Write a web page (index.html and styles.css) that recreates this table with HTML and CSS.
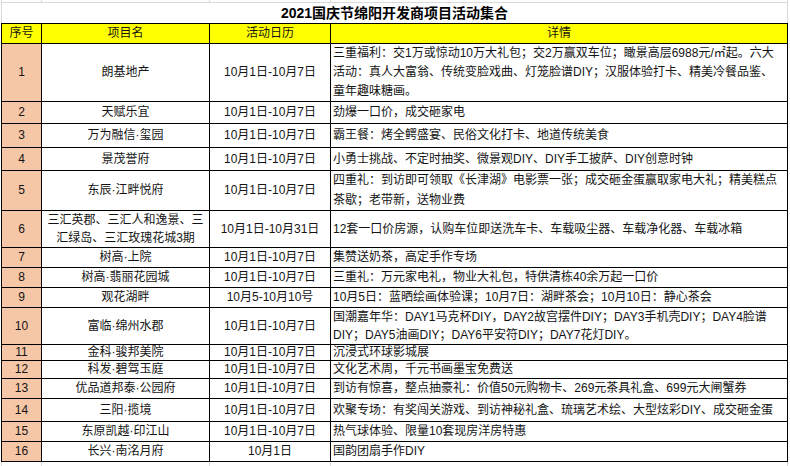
FILE: index.html
```html
<!DOCTYPE html>
<html lang="zh-CN">
<head>
<meta charset="utf-8">
<title>2021国庆节绵阳开发商项目活动集合</title>
<link rel="stylesheet" href="styles.css">
</head>
<body>
<div class="sheet">
<table class="grid">
  <colgroup>
    <col class="c-no"><col class="c-name"><col class="c-date"><col class="c-detail">
  </colgroup>
  <tr class="strip"><td></td><td></td><td></td><td></td></tr>
  <tr class="title-row"><td class="title" colspan="4">2021国庆节绵阳开发商项目活动集合</td></tr>
  <tr class="head h20"><td>序号</td><td>项目名</td><td>活动日历</td><td>详情</td></tr>
  <tr class="h58"><td class="no">1</td><td class="ctr">朗基地产</td><td class="ctr">10月1日-10月7日</td><td class="det l20">三重福利：交1万或惊动10万大礼包；交2万赢双车位；瞰景高层6988元/㎡起。六大<br>活动：真人大富翁、传统变脸戏曲、灯笼脸谱DIY；汉服体验打卡、精美冷餐品鉴、<br>童年趣味糖画。</td></tr>
  <tr class="h22"><td class="no">2</td><td class="ctr">天赋乐宜</td><td class="ctr">10月1日-10月7日</td><td class="det">劲爆一口价，成交砸家电</td></tr>
  <tr class="h24"><td class="no">3</td><td class="ctr">万为融信·玺园</td><td class="ctr">10月1日-10月7日</td><td class="det">霸王餐：烤全鳄盛宴、民俗文化打卡、地道传统美食</td></tr>
  <tr class="h23"><td class="no">4</td><td class="ctr">景茂誉府</td><td class="ctr">10月1日-10月7日</td><td class="det">小勇士挑战、不定时抽奖、微景观DIY、DIY手工披萨、DIY创意时钟</td></tr>
  <tr class="h40"><td class="no">5</td><td class="ctr">东辰·江畔悦府</td><td class="ctr">10月1日-10月7日</td><td class="det l19">四重礼：到访即可领取《长津湖》电影票一张；成交砸金蛋赢取家电大礼；精美糕点<br>茶歇；老带新，送物业费</td></tr>
  <tr class="h37"><td class="no">6</td><td class="ctr l18">三汇英郡、三汇人和逸景、三<br>汇绿岛、三汇玫瑰花城3期</td><td class="ctr">10月1日-10月31日</td><td class="det">12套一口价房源，认购车位即送洗车卡、车载吸尘器、车载净化器、车载冰箱</td></tr>
  <tr class="h20"><td class="no">7</td><td class="ctr">树高·上院</td><td class="ctr">10月1日-10月7日</td><td class="det">集赞送奶茶，高定手作专场</td></tr>
  <tr class="h20"><td class="no">8</td><td class="ctr">树高·翡丽花园城</td><td class="ctr">10月1日-10月7日</td><td class="det">三重礼：万元家电礼，物业大礼包，特供清栋40余万起一口价</td></tr>
  <tr class="h20"><td class="no">9</td><td class="ctr">观花湖畔</td><td class="ctr">10月5-10月10号</td><td class="det">10月5日：蓝晒绘画体验课；10月7日：湖畔茶会；10月10日：静心茶会</td></tr>
  <tr class="h37"><td class="no">10</td><td class="ctr">富临·绵州水郡</td><td class="ctr">10月1日-10月7日</td><td class="det l18">国潮嘉年华：DAY1马克杯DIY，DAY2故宫摆件DIY；DAY3手机壳DIY；DAY4脸谱<br>DIY；DAY5油画DIY；DAY6平安符DIY；DAY7花灯DIY。</td></tr>
  <tr class="h16"><td class="no">11</td><td class="ctr">金科·骏邦美院</td><td class="ctr">10月1日-10月7日</td><td class="det">沉浸式环球影城展</td></tr>
  <tr class="h18"><td class="no">12</td><td class="ctr">科发·碧驾玉庭</td><td class="ctr">10月1日-10月7日</td><td class="det">文化艺术周，千元书画墨宝免费送</td></tr>
  <tr class="h20"><td class="no">13</td><td class="ctr">优品道邦泰·公园府</td><td class="ctr">10月1日-10月7日</td><td class="det">到访有惊喜，整点抽豪礼：价值50元购物卡、269元茶具礼盒、699元大闸蟹券</td></tr>
  <tr class="h23"><td class="no">14</td><td class="ctr">三阳·揽境</td><td class="ctr">10月1日-10月7日</td><td class="det">欢聚专场：有奖闯关游戏、到访神秘礼盒、琉璃艺术绘、大型炫彩DIY、成交砸金蛋</td></tr>
  <tr class="h20"><td class="no">15</td><td class="ctr">东原凯越·印江山</td><td class="ctr">10月1日-10月7日</td><td class="det">热气球体验、限量10套现房洋房特惠</td></tr>
  <tr class="h20"><td class="no">16</td><td class="ctr">长兴·南洺月府</td><td class="ctr">10月1日</td><td class="det">国韵团扇手作DIY</td></tr>
  <tr class="strip bottom"><td></td><td></td><td></td><td></td></tr>
</table>
</div>
</body>
</html>
```
FILE: styles.css
```css
html, body {
  margin: 0;
  padding: 0;
  background: #ffffff;
}

body {
  font-family: "Liberation Sans", "Noto Sans CJK SC", sans-serif;
  color: #141414;
  width: 790px;
  height: 466px;
  overflow: hidden;
}

.sheet {
  padding-left: 1px;
}

.grid {
  border-collapse: collapse;
  table-layout: fixed;
  width: 786px;
  font-size: 12px;
  line-height: 15px;
}

.c-no { width: 40px; }
.c-name { width: 168px; }
.c-date { width: 121px; }
.c-detail { width: 457px; }

.grid td {
  border: 1px solid #000;
  padding: 0;
  vertical-align: middle;
  white-space: nowrap;
  overflow: hidden;
}

.strip td {
  height: 2px;
  border-top: none;
  border-left: 1px solid #d9d9d9;
  border-right: 1px solid #d9d9d9;
  border-bottom: 1px solid #d9d9d9;
}

.strip.bottom td {
  height: 4px;
  border-bottom: none;
}

.title-row td {
  height: 20px;
  border-left: 1px solid #d9d9d9;
  border-right: 1px solid #d9d9d9;
  border-top: 1px solid #d9d9d9;
  border-bottom: 1px solid #000;
}

.title {
  text-align: center;
  font-weight: bold;
  font-size: 14px;
  color: #000;
}

.head td {
  background: #ffff00;
  text-align: center;
}

.no {
  background: #f6c7a7;
  text-align: center;
}

.ctr { text-align: center; }

.det {
  text-align: left;
  padding-left: 2px !important;
}

.l18 { line-height: 18px; }
.l19 { line-height: 19.5px; }
.l20 { line-height: 19px; }

.h16 td { height: 15px; }
.h18 td { height: 17px; }
.h20 td { height: 19px; }
.h22 td { height: 21px; }
.h23 td { height: 22px; }
.h24 td { height: 23px; }
.h37 td { height: 36px; }
.h40 td { height: 39px; }
.h58 td { height: 57px; }
```
